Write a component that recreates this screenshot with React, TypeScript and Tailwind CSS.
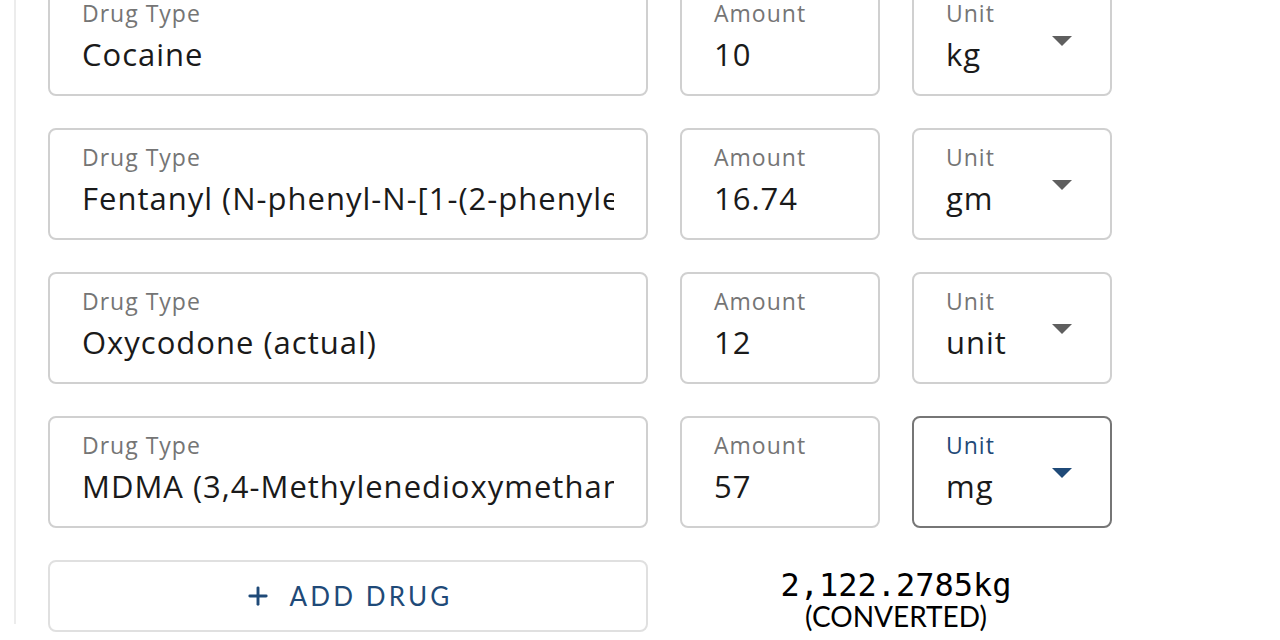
import { Plus } from "lucide-react";

type Row = { drug: string; amount: string; unit: string; focused?: boolean };

const ROWS: Row[] = [
  { drug: "Cocaine", amount: "10", unit: "kg" },
  { drug: "Fentanyl (N-phenyl-N-[1-(2-phenylethyl)-4-piperidinyl] propanamide)", amount: "16.74", unit: "gm" },
  { drug: "Oxycodone (actual)", amount: "12", unit: "unit" },
  { drug: "MDMA (3,4-Methylenedioxymethamphetamine)", amount: "57", unit: "mg", focused: true },
];

function Field({ label, value, className = "" }: { label: string; value: string; className?: string }) {
  return (
    <div className={`h-[112px] rounded-lg border-2 border-[#d0d0d0] bg-white px-[32px] pt-[11px] ${className}`}>
      <div className="text-[23px] leading-[32px] tracking-[1px] text-[#757575]">{label}</div>
      <div className="mt-[2px] overflow-hidden whitespace-nowrap text-[31px] leading-[46px] tracking-[1px] text-[#1a1a1a]">{value}</div>
    </div>
  );
}

function UnitSelect({ value, focused }: { value: string; focused?: boolean }) {
  return (
    <div
      className={`flex h-[112px] w-[200px] items-start justify-between rounded-lg border-2 bg-white pl-[32px] pr-[38px] pt-[11px] ${
        focused ? "border-[#767676]" : "border-[#d0d0d0]"
      }`}
    >
      <div>
        <div className={`text-[23px] leading-[32px] tracking-[1px] ${focused ? "text-[#1f4a78]" : "text-[#757575]"}`}>Unit</div>
        <div className="mt-[2px] text-[31px] leading-[46px] tracking-[1px] text-[#1a1a1a]">{value}</div>
      </div>
      <svg className="mt-[39px]" width="20" height="10" viewBox="0 0 20 10">
        <path d="M0 0h20L10 10z" fill={focused ? "#1f4a78" : "#5f5f5f"} />
      </svg>
    </div>
  );
}

export default function App() {
  return (
    <div className="h-[640px] w-[1280px] overflow-hidden bg-white" style={{ fontFamily: "'Open Sans', 'Noto Sans', sans-serif" }}>
      <div className="ml-[14px] h-full border-l-2 border-[#ececec] pl-[32px]">
        <div className="-mt-[16px] flex flex-col gap-[32px]">
          {ROWS.map((r, i) => (
            <div key={i} className="flex gap-[32px]">
              <Field label="Drug Type" value={r.drug} className="w-[600px]" />
              <Field label="Amount" value={r.amount} className="w-[200px]" />
              <UnitSelect value={r.unit} focused={r.focused} />
            </div>
          ))}
          <div className="flex gap-[32px]">
            <button
              className="flex h-[72px] w-[600px] items-center justify-center gap-[18px] rounded-lg border-2 border-[#e0e0e0] bg-white text-[26px] tracking-[0.12em] text-[#1f4a78]"
              style={{ fontFamily: "Lato, sans-serif" }}
            >
              <Plus size={28} strokeWidth={2.5} />
              <span>ADD DRUG</span>
            </button>
            <div className="flex w-[432px] flex-col items-center pt-[8px]">
              <div className="text-[32px] leading-[34px] text-black" style={{ fontFamily: "'DejaVu Sans Mono', monospace" }}>2,122.2785kg</div>
              <div className="text-[28px] leading-[28px] text-black" style={{ fontFamily: "Lato, sans-serif" }}>(CONVERTED)</div>
            </div>
          </div>
        </div>
      </div>
    </div>
  );
}
